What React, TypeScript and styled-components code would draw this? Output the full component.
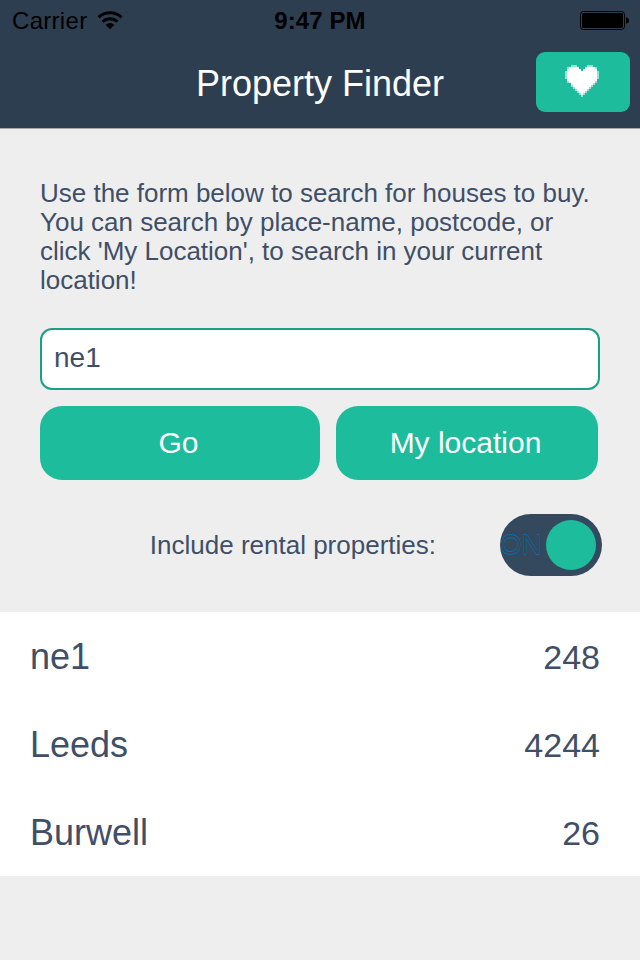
import React from 'react';
import styled, { createGlobalStyle } from 'styled-components';

const Global = createGlobalStyle`
  * { box-sizing: border-box; }
  body { margin: 0; background: #eee; }
  button, input { font: inherit; margin: 0; border: 0; padding: 0; }
`;

const Screen = styled.main`
  width: 640px;
  height: 960px;
  background: #eeeeee;
  color: #3f4f67;
  font-family: 'Liberation Sans', Arial, sans-serif;
  overflow: hidden;
`;

const Header = styled.header`
  height: 129px;
  background: #2d3e50;
  border-bottom: 1px solid #a5a8ab;
`;

const StatusBar = styled.div`
  height: 40px;
  padding: 0 11px 0 12px;
  display: grid;
  grid-template-columns: 1fr auto 1fr;
  grid-template-rows: 40px;
  align-items: center;
  color: #000;
  font-size: 24px;
  line-height: 38px;
`;

const Carrier = styled.div`
  display: flex;
  align-items: center;
  gap: 10px;
  letter-spacing: 0.3px;
  padding-top: 2px;

  svg {
    margin-top: -2px;
  }
`;

const Time = styled.div`
  font-weight: 700;
  letter-spacing: 0.1px;
  margin-left: -1px;
  padding-top: 2px;
`;

const Battery = styled.svg`
  justify-self: end;
`;

const NavBar = styled.div`
  height: 88px;
  padding: 12px 10px 16px;
  display: grid;
  grid-template-columns: 94px 1fr 94px;
  align-items: center;
`;

const Title = styled.h1`
  grid-column: 2;
  margin: 0;
  padding-top: 4px;
  text-align: center;
  color: #fff;
  font-weight: 400;
  font-size: 36px;
  line-height: 42px;
`;

const FavouriteButton = styled.button`
  height: 60px;
  border-radius: 9px;
  background: #1dbc9c;
  display: flex;
  align-items: flex-start;
  padding: 13px 0 0 29px;
`;

const Form = styled.form`
  padding: 50px 40px 0;
  height: 483px;
`;

const Intro = styled.p`
  margin: 0;
  width: 560px;
  height: 149px;
  font-size: 26px;
  line-height: 29px;
  letter-spacing: -0.01px;
  white-space: pre-line;
`;

const SearchField = styled.input`
  display: block;
  width: 560px;
  height: 62px;
  border: 2px solid #1aa085;
  border-radius: 12px;
  background: #fff;
  color: inherit;
  padding: 0 12px 3px;
  font-size: 28px;
`;

const Actions = styled.div`
  margin-top: 16px;
  display: flex;
  gap: 16px;
`;

const ActionButton = styled.button<{ $width: number }>`
  width: ${(p) => p.$width}px;
  height: 74px;
  padding-right: 3px;
  border-radius: 22px;
  background: #1dbc9c;
  color: #fff;
  font-size: 30px;
`;

const RentalRow = styled.div`
  margin: 34px -2px 0 0;
  height: 62px;
  display: flex;
  align-items: center;
  justify-content: flex-end;
  gap: 64px;
  font-size: 26px;
`;

const Switch = styled.div`
  width: 102px;
  height: 62px;
  border-radius: 31px;
  background: #34495e;
  display: flex;
  align-items: center;
  justify-content: space-between;
  padding: 0 6px 0 0;
`;

const SwitchLabel = styled.span`
  font-size: 28px;
  line-height: 32px;
  color: #34495e;
  text-shadow: 0 -1px 0 #006fb5, 0 1px 0 #006fb5;
`;

const Knob = styled.span`
  width: 50px;
  height: 50px;
  flex: none;
  border-radius: 50%;
  background: #1dbc9c;
`;

const Results = styled.ul`
  margin: 0;
  padding: 0;
  list-style: none;
  background: #fff;
`;

const ResultRow = styled.li`
  height: 88px;
  padding: 2px 40px 0 30px;
  display: flex;
  align-items: center;
  justify-content: space-between;
`;

const Place = styled.span`
  font-size: 36px;
`;

const Count = styled.span`
  font-size: 34px;
`;

const searches = [
  { place: 'ne1', count: 248 },
  { place: 'Leeds', count: 4244 },
  { place: 'Burwell', count: 26 },
];

const WifiIcon = () => (
  <svg width="26" height="20" viewBox="0 0 26 20">
    <g fill="none" stroke="#000" strokeWidth="3">
      <path d="M1.5 7.3C8 1.2 18 1.2 24.5 7.3" />
      <path d="M5.5 11.7C9.8 7.6 16.2 7.6 20.5 11.7" />
    </g>
    <path d="M8.6 14.7Q13 11.1 17.4 14.7L13 19.2Z" />
  </svg>
);

const BatteryIcon = () => (
  <Battery width="49" height="19" viewBox="0 0 49 19">
    <rect x=".5" y=".5" width="44" height="18" rx="3" fill="none" stroke="#000" />
    <rect x="2" y="2" width="41" height="15" rx="1.5" />
    <path d="M46 6.2Q49 7 49 9.5T46 12.8Z" />
  </Battery>
);

// Pixel heart on a 17 x 16 grid, with a translucent rim around the solid body.
const HeartIcon = () => (
  <svg width="34" height="32" viewBox="0 0 17 16" shapeRendering="crispEdges">
    <path
      fill="#fff"
      fillOpacity=".55"
      d="M3 0h3v1h1v1h1v1h1V2h1V1h1V0h3v1h2v2h1v4h-1v2h-1v1h-1v1h-1v1h-1v1h-1v1h-1v1h-1v1H8v-1H7v-1H6v-1H5v-1H4v-1H3V9H1V7H0V3h1V1h2Z"
    />
    <path
      fill="#fff"
      d="M2 1h5v1h1v1h1V2h1V1h5v1h1v6h-1v1h-1v1h-1v1h-1v1h-1v1h-1v1H9v1H8v-1H7v-1H6v-1H5v-1H4v-1H3V9H2V8H1V2h1Z"
    />
  </svg>
);

export default function App() {
  return (
    <>
      <Global />
      <Screen>
        <Header>
          <StatusBar>
            <Carrier>
              Carrier
              <WifiIcon />
            </Carrier>
            <Time>9:47 PM</Time>
            <BatteryIcon />
          </StatusBar>
          <NavBar>
            <Title>Property Finder</Title>
            <FavouriteButton aria-label="Favourites">
              <HeartIcon />
            </FavouriteButton>
          </NavBar>
        </Header>
        <Form onSubmit={(e) => e.preventDefault()}>
          <Intro>
            {"Use the form below to search for houses to buy.\nYou can search by place-name, postcode, or\nclick 'My Location', to search in your current\nlocation!"}
          </Intro>
          <SearchField defaultValue="ne1" aria-label="Search" />
          <Actions>
            <ActionButton $width={280}>Go</ActionButton>
            <ActionButton $width={262} type="button">My location</ActionButton>
          </Actions>
          <RentalRow>
            Include rental properties:
            <Switch role="switch" aria-checked="true">
              <SwitchLabel>ON</SwitchLabel>
              <Knob />
            </Switch>
          </RentalRow>
        </Form>
        <Results>
          {searches.map((s) => (
            <ResultRow key={s.place}>
              <Place>{s.place}</Place>
              <Count>{s.count}</Count>
            </ResultRow>
          ))}
        </Results>
      </Screen>
    </>
  );
}
